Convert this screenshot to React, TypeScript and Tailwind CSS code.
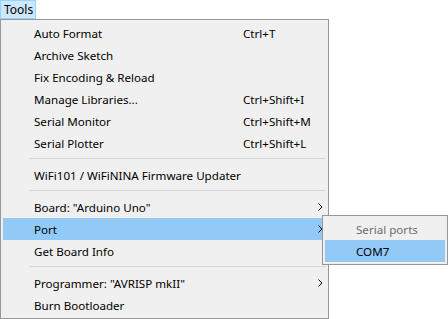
import React from "react";

const Chevron = () => (
  <svg width="5" height="8" viewBox="0 0 5 8" className="absolute right-[3px] top-[7px]">
    <path d="M0.5 0.5 L4 4 L0.5 7.5" fill="none" stroke="#000" strokeWidth="1" />
  </svg>
);

type Item = { label: string; shortcut?: string; arrow?: boolean; active?: boolean } | "sep";

const items: Item[] = [
  { label: "Auto Format", shortcut: "Ctrl+T" },
  { label: "Archive Sketch" },
  { label: "Fix Encoding & Reload" },
  { label: "Manage Libraries...", shortcut: "Ctrl+Shift+I" },
  { label: "Serial Monitor", shortcut: "Ctrl+Shift+M" },
  { label: "Serial Plotter", shortcut: "Ctrl+Shift+L" },
  "sep",
  { label: "WiFi101 / WiFiNINA Firmware Updater" },
  "sep",
  { label: 'Board: "Arduino Uno"', arrow: true },
  { label: "Port", arrow: true, active: true },
  { label: "Get Board Info" },
  "sep",
  { label: 'Programmer: "AVRISP mkII"', arrow: true },
  { label: "Burn Bootloader" },
];

export default function App() {
  return (
    <div
      className="relative w-[448px] h-[319px] bg-white text-[11.6px] text-black overflow-hidden"
      style={{ fontFamily: '"Noto Sans", sans-serif' }}
    >
      <div className="h-[19px] flex">
        <div className="h-[19px] w-[36px] bg-[#cce8ff] border border-[#99d1ff] flex items-center pl-[3px] text-[12px] leading-none">
          Tools
        </div>
      </div>

      <div className="absolute left-0 top-[19px] w-[329px] h-[300px] bg-[#f0f0f0] border border-[#979797] py-[2px]">
        {items.map((it, i) =>
          it === "sep" ? (
            <div key={i} className="h-[10px] pt-[4px] pl-[28px] pr-[2px]">
              <div className="h-px bg-[#d7d7d7]" />
            </div>
          ) : (
            <div
              key={i}
              className={`relative mx-[2px] h-[22px] flex items-center pl-[31px] pt-[1px] leading-none ${
                it.active ? "bg-[#91c9f7]" : ""
              }`}
            >
              <span className="w-[209px] whitespace-nowrap">{it.label}</span>
              {it.shortcut && <span className="whitespace-nowrap">{it.shortcut}</span>}
              {it.arrow && <Chevron />}
            </div>
          )
        )}
      </div>

      <div className="absolute left-[322px] top-[215px] w-[126px] bg-[#f0f0f0] border border-[#979797] py-[2px]">
        <div className="mx-[2px] h-[22px] flex items-center pl-[31px] pt-[1px] leading-none text-[#6d6d6d]">
          Serial ports
        </div>
        <div className="mx-[2px] h-[22px] flex items-center pl-[31px] pt-[1px] leading-none bg-[#91c9f7]">
          COM7
        </div>
      </div>
    </div>
  );
}
